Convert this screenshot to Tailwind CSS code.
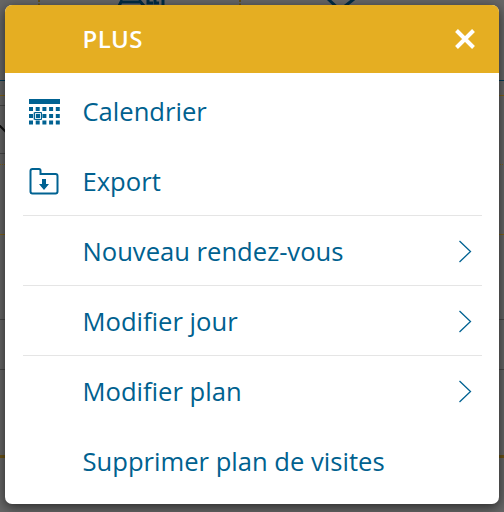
<!DOCTYPE html>
<html lang="fr">
<head>
<meta charset="utf-8">
<title>Plus</title>
<script src="https://cdn.jsdelivr.net/npm/@tailwindcss/browser@4"></script>
</head>
<body class="relative h-[512px] w-[504px] overflow-hidden bg-[#666] p-[5px] font-['Open_Sans','Noto_Sans',sans-serif]">
  <!-- Dimmed page behind the dialog -->
  <svg class="absolute inset-0" width="504" height="512" fill="none" aria-hidden="true">
    <path d="M39 0v5M240 0v5" stroke="#665019" stroke-width="2" stroke-dasharray="2 1.5"/>
    <path d="M119 6l3-6M122 2h18M139 0l5 6M148 0v3h5M155 0v3h4M163 0v6" stroke="#002c44" stroke-width="3"/>
    <path d="M328-1l12 11L354-1" stroke="#002c44" stroke-width="3"/>
    <path d="M0 80.5h504" stroke="#003a55"/>
    <path d="M0 95.5h504M0 234.5h504" stroke="#80621a"/>
    <path d="M0 105.500h6M0 153.500h6M0 319.500h504M0 369.500h504" stroke="#484848"/>
    <path d="M0 164.500h504" stroke="#80621a" stroke-dasharray="1 1"/>
    <path d="M-1 125l7 7" stroke="#111" stroke-width="2"/>
    <path d="M0 456.500h504" stroke="#6b5216" stroke-width="3"/>
  </svg>

  <section class="relative flex h-[499px] w-[494px] flex-col overflow-hidden rounded-[7px] bg-white text-[25.6px] text-[#00618f] shadow-[0_3px_12px_rgba(0,0,0,0.6)]">
    <header class="flex h-[68px] shrink-0 items-center justify-between bg-[#e5ae22] pr-6 pl-[77.500px] text-white">
      <h1 class="text-[24px] leading-[68px] font-semibold tracking-[0.4px]">PLUS</h1>
      <button type="button" aria-label="Fermer">
        <svg width="20" height="20" fill="none" stroke="currentColor" stroke-width="4" aria-hidden="true"><path d="M1.500 1.500l17 17M18.500 1.500l-17 17"/></svg>
      </button>
    </header>
    <nav class="flex flex-col pr-[17px] pl-[18px] pt-[3px] leading-[68px]">
      <a class="flex h-[70px] items-center">
        <svg class="mr-[20.500px] ml-[6px]" width="33" height="30" fill="none" aria-hidden="true">
          <path d="M0 5.500h31" stroke="#006292" stroke-width="5"/>
          <path d="M0 13h31M0 20h31M0 26.500h31" stroke="#006292" stroke-width="4" stroke-dasharray="4 2.700"/>
          <path d="M4 16.500h6v7H4z" fill="#7eb1cb"/>
          <path d="M4.500 16h8v8h-8z" fill="#d5e6ee"/>
          <path d="M5.500 16.500h7v7h-7z" stroke="#006292"/>
          <path d="M7 18h4v4H7z" fill="#006292"/>
        </svg>
        <span class="pt-[2px]">Calendrier</span>
      </a>
      <a class="flex h-[70px] items-center border-b border-[#e5e5e5]">
        <svg class="mr-[20.500px] ml-[6px]" width="33" height="30" fill="none" aria-hidden="true">
          <path d="M1.500 25.500v-20.500q0-2 2-2h6.500q1.500 0 1.500 1.500v3.500h15q2 0 2 2v15.500q0 2-2 2h-23q-2 0-2-2z" stroke="#006292" stroke-width="2"/>
          <path d="M13 13h4v5h3l-5 6-5-6h3z" fill="#006292"/>
        </svg>
        <span class="pt-[2px]">Export</span>
      </a>
      <a class="flex h-[70px] items-center justify-between border-b border-[#e5e5e5] pr-[10px] pl-[59.500px]">
        <span class="pt-[2px]">Nouveau rendez-vous</span>
        <svg class="mt-[2px]" width="14" height="24" fill="none" stroke="#006292" stroke-width="1.300" aria-hidden="true"><path d="M1.500 1L12.500 11.500 1.500 22"/></svg>
      </a>
      <a class="flex h-[70px] items-center justify-between border-b border-[#e5e5e5] pr-[10px] pl-[59.500px]">
        <span class="pt-[2px]">Modifier jour</span>
        <svg class="mt-[2px]" width="14" height="24" fill="none" stroke="#006292" stroke-width="1.300" aria-hidden="true"><path d="M1.500 1L12.500 11.500 1.500 22"/></svg>
      </a>
      <a class="flex h-[70px] items-center justify-between pr-[10px] pl-[59.500px]">
        <span class="pt-[2px]">Modifier plan</span>
        <svg class="mt-px" width="14" height="24" fill="none" stroke="#006292" stroke-width="1.300" aria-hidden="true"><path d="M1.500 1L12.500 11.500 1.500 22"/></svg>
      </a>
      <a class="flex h-[70px] items-center pl-[59.500px]"><span class="pt-[2px]">Supprimer plan de visites</span></a>
    </nav>
  </section>
</body>
</html>
